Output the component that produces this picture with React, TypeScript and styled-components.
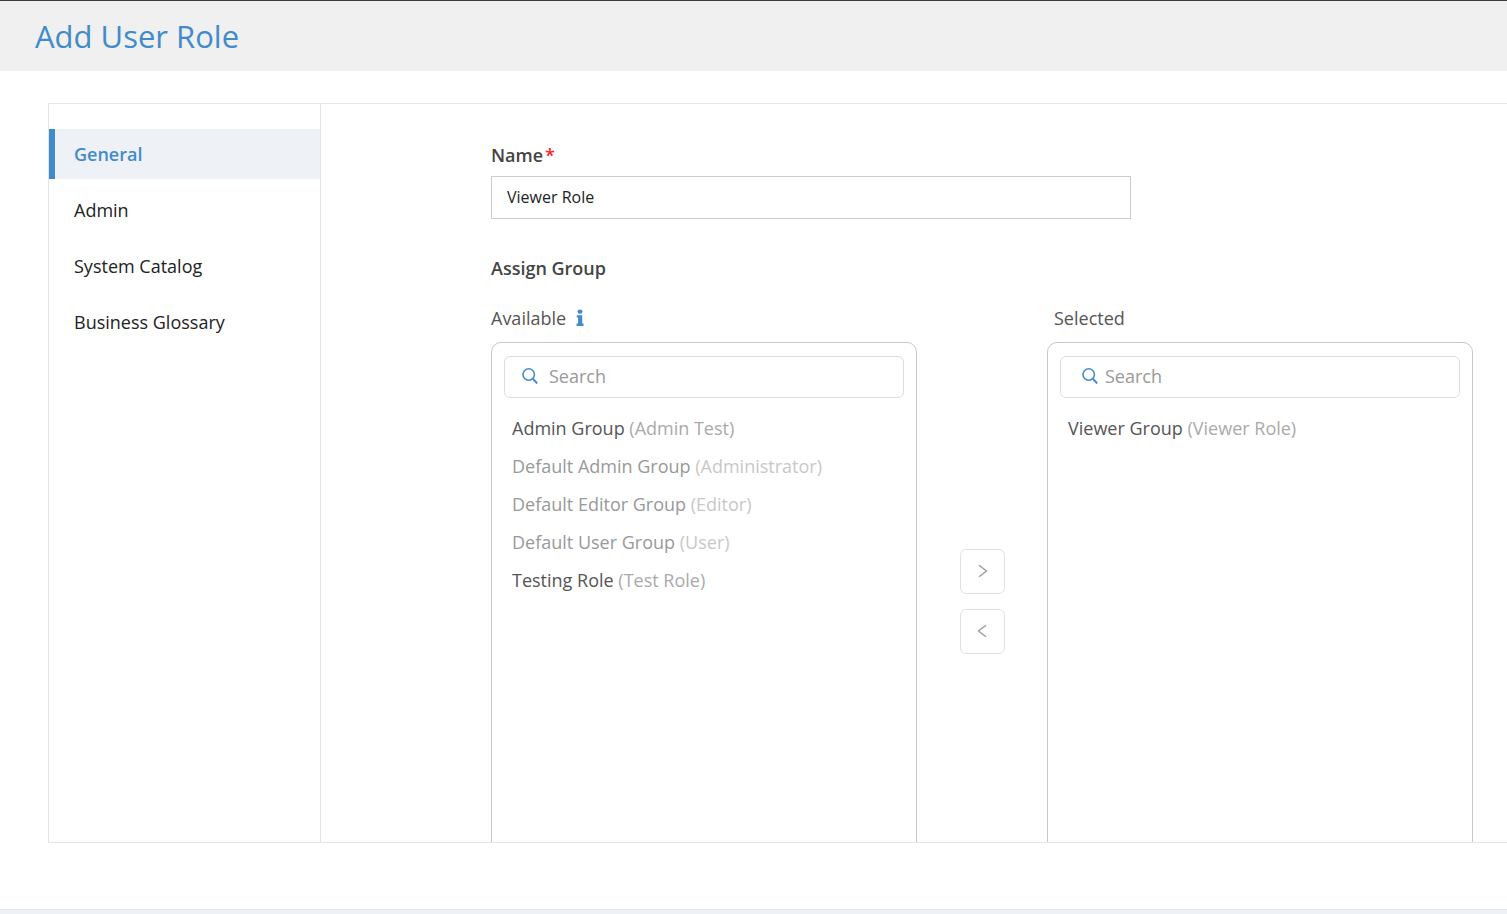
import React, { useState } from "react";
import styled, { createGlobalStyle } from "styled-components";

const GlobalStyle = createGlobalStyle`
  *, *::before, *::after { box-sizing: border-box; }
  body {
    margin: 0;
    background: #fff;
    color: #4a4a4a;
    font-family: "Open Sans", "Noto Sans", sans-serif;
    font-size: 18px;
  }
  button, input { font-family: inherit; }
`;

const Page = styled.div`
  display: flex;
  flex-direction: column;
  height: 100vh;
  overflow: hidden;
`;

const Header = styled.header`
  flex: none;
  padding: 11px 35px;
  border-top: 1px solid #3c3c40;
  background: #f0f0f0;
`;

const Title = styled.h1`
  margin: 0;
  color: #428bca;
  font-size: 31px;
  font-weight: 400;
  line-height: 48px;
`;

const Workspace = styled.main`
  display: flex;
  flex: 1;
  min-height: 0;
  margin: 32px 0 66px 48px;
  border: 1px solid #e4e4e4;
  border-right: 0;
`;

const SideNav = styled.nav`
  display: flex;
  flex: none;
  flex-direction: column;
  gap: 6px;
  width: 272px;
  padding-top: 25px;
  border-right: 1px solid #e4e4e4;
`;

const NavLink = styled.a<{ $active: boolean }>`
  padding: 0 19px;
  border-left: 6px solid ${(p) => (p.$active ? "#428bca" : "transparent")};
  background: ${(p) => (p.$active ? "#eef1f6" : "transparent")};
  color: ${(p) => (p.$active ? "#428bca" : "#222")};
  font-weight: ${(p) => (p.$active ? 600 : 400)};
  line-height: 50px;
  text-decoration: none;
`;

const Content = styled.form`
  flex: 1;
  min-width: 0;
  padding: 39px 34px 0 170px;
  overflow: hidden;
`;

const FieldLabel = styled.label`
  display: block;
  margin-bottom: 9px;
  color: #444;
  font-weight: 600;
  line-height: 24px;
`;

const Required = styled.span`
  margin-left: 2px;
  color: #f22;
`;

const NameInput = styled.input`
  display: block;
  width: 100%;
  max-width: 640px;
  height: 43px;
  padding: 0 15px 2px;
  border: 1px solid #ccc;
  color: #222;
  font-size: 16px;
`;

const SectionTitle = styled.h2`
  margin: 37px 0 26px;
  color: #444;
  font-size: 18px;
  font-weight: 600;
  line-height: 24px;
`;

const Transfer = styled.div`
  display: grid;
  grid-template-columns: minmax(0, 1fr) 130px minmax(0, 1fr);
`;

const Column = styled.section``;

const ColumnTitle = styled.h3<{ $indent: number }>`
  display: flex;
  align-items: center;
  gap: 10px;
  margin: 0 0 12px;
  padding-left: ${(p) => p.$indent}px;
  color: #555;
  font-size: 18px;
  font-weight: 400;
  line-height: 24px;
`;

const Panel = styled.div`
  height: 560px;
  padding: 13px 12px;
  border: 1px solid #c8c8c8;
  border-radius: 10px;
`;

const SearchBox = styled.label<{ $inset: number; $gap: number }>`
  display: flex;
  align-items: center;
  gap: ${(p) => p.$gap}px;
  height: 42px;
  padding: 0 ${(p) => p.$inset}px 2px;
  border: 1px solid #ddd;
  border-radius: 6px;
`;

const SearchInput = styled.input`
  flex: 1;
  min-width: 0;
  padding: 0;
  border: 0;
  outline: 0;
  background: transparent;
  color: #555;
  font-size: 18px;
  line-height: 24px;
  &::placeholder { color: #999; opacity: 1; }
`;

const GroupList = styled.ul`
  margin: 11px 0 0;
  padding: 0 8px;
  list-style: none;
`;

const GroupButton = styled.button`
  display: block;
  padding: 0;
  border: 0;
  background: none;
  color: #555;
  font-size: 18px;
  line-height: 38px;
  text-align: left;
  cursor: pointer;
  &:disabled { color: #999; cursor: default; }
`;

const RoleName = styled.span`
  color: #aaa;
  ${GroupButton}:disabled & { color: #c8c8c8; }
`;

const MoveControls = styled.div`
  display: flex;
  flex-direction: column;
  align-items: center;
  gap: 15px;
  padding-top: 243px;
`;

const MoveButton = styled.button`
  display: flex;
  align-items: center;
  justify-content: center;
  width: 45px;
  height: 45px;
  padding: 0;
  border: 1px solid #e2e2e2;
  border-radius: 6px;
  background: #fff;
  cursor: pointer;
`;

const Footer = styled.footer`
  flex: none;
  height: 5px;
  border-top: 1px solid #e2e6ea;
  background: #eef1f6;
`;

const SearchIcon = () => (
  <svg width="16" height="16" viewBox="0 0 16 16" fill="none" stroke="#428bca" aria-hidden="true">
    <circle cx="6.7" cy="6.5" r="5.7" strokeWidth="1.6" />
    <path d="M10.7 10.6L15.2 15.4" strokeWidth="2" />
  </svg>
);

const InfoIcon = () => (
  <svg width="8" height="19" viewBox="0 0 8 19" fill="#428bca" role="img" aria-label="Information">
    <ellipse cx="4" cy="2.6" rx="2.5" ry="2.2" />
    <path d="M.8 6.2h5.4v8.4h1.3v2.4H.6v-2.4h1.5V8.6H.8z" />
  </svg>
);

const Chevron = ({ left = false }: { left?: boolean }) => (
  <svg width="11" height="15" viewBox="0 0 11 15" fill="none" stroke="#999ba0" strokeWidth="1.4" aria-hidden="true">
    <path d={left ? "M9 1.2L1.5 7 9 12.8" : "M2 1.2L9.5 7 2 12.8"} />
  </svg>
);

type Group = { name: string; role: string; locked?: boolean };

const sections = ["General", "Admin", "System Catalog", "Business Glossary"];

const availableGroups: Group[] = [
  { name: "Admin Group", role: "Admin Test" },
  { name: "Default Admin Group", role: "Administrator", locked: true },
  { name: "Default Editor Group", role: "Editor", locked: true },
  { name: "Default User Group", role: "User", locked: true },
  { name: "Testing Role", role: "Test Role" },
];

const selectedGroups: Group[] = [{ name: "Viewer Group", role: "Viewer Role" }];

type GroupPanelProps = { label: string; groups: Group[]; inset: number; gap: number };

function GroupPanel({ label, groups, inset, gap }: GroupPanelProps) {
  const [query, setQuery] = useState("");
  const shown = groups.filter((g) => g.name.toLowerCase().includes(query.toLowerCase()));
  return (
    <Panel>
      <SearchBox $inset={inset} $gap={gap}>
        <SearchIcon />
        <SearchInput
          placeholder="Search"
          aria-label={label}
          value={query}
          onChange={(e) => setQuery(e.target.value)}
        />
      </SearchBox>
      <GroupList>
        {shown.map((g) => (
          <li key={g.name}>
            <GroupButton type="button" disabled={g.locked}>
              {g.name} <RoleName>({g.role})</RoleName>
            </GroupButton>
          </li>
        ))}
      </GroupList>
    </Panel>
  );
}

export default function App() {
  return (
    <>
      <GlobalStyle />
      <Page>
        <Header>
          <Title>Add User Role</Title>
        </Header>
        <Workspace>
          <SideNav>
            {sections.map((s, i) => (
              <NavLink key={s} href="#" $active={i === 0}>
                {s}
              </NavLink>
            ))}
          </SideNav>
          <Content>
            <FieldLabel htmlFor="role-name">
              Name<Required>*</Required>
            </FieldLabel>
            <NameInput id="role-name" defaultValue="Viewer Role" required />
            <SectionTitle>Assign Group</SectionTitle>
            <Transfer>
              <Column>
                <ColumnTitle $indent={0}>
                  Available
                  <InfoIcon />
                </ColumnTitle>
                <GroupPanel label="Search available groups" groups={availableGroups} inset={17} gap={11} />
              </Column>
              <MoveControls>
                <MoveButton type="button" aria-label="Add to selected">
                  <Chevron />
                </MoveButton>
                <MoveButton type="button" aria-label="Remove from selected">
                  <Chevron left />
                </MoveButton>
              </MoveControls>
              <Column>
                <ColumnTitle $indent={7}>Selected</ColumnTitle>
                <GroupPanel label="Search selected groups" groups={selectedGroups} inset={21} gap={7} />
              </Column>
            </Transfer>
          </Content>
        </Workspace>
        <Footer />
      </Page>
    </>
  );
}
